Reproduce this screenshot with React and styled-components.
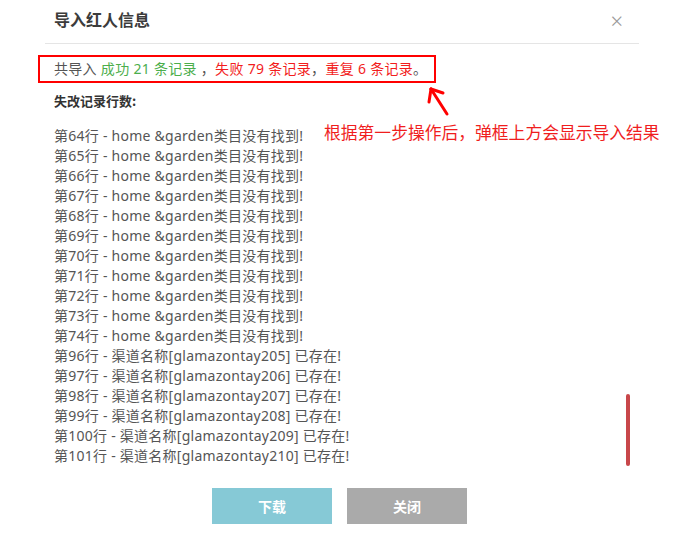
import React from "react";
import styled, { createGlobalStyle } from "styled-components";

const Global = createGlobalStyle`
  html, body { margin: 0; padding: 0; background: #fff; }
  body { font-family: "Noto Sans", "Noto Sans CJK SC", sans-serif; }
`;

const Page = styled.div`
  position: relative;
  width: 683px;
  height: 536px;
  overflow: hidden;
  background: #fff;
`;

const Dialog = styled.div`
  margin-left: 45px;
  width: 594px;
`;

const Header = styled.div`
  height: 44px;
  box-sizing: border-box;
  border-bottom: 1px solid #e5e5e5;
  display: flex;
  justify-content: space-between;
  align-items: flex-start;
  padding: 0 16px 0 9px;
`;

const Title = styled.div`
  font-family: "Noto Sans CJK SC", sans-serif;
  font-size: 16px;
  font-weight: bold;
  color: #3c3c3c;
  line-height: 38px;
`;

const Close = styled.div`
  font-family: "Noto Sans", sans-serif;
  font-size: 22px;
  font-weight: 300;
  color: #999;
  line-height: 40px;
`;

const Body = styled.div`
  padding: 11px 0 0 9px;
`;

const Summary = styled.div`
  box-sizing: border-box;
  width: 398px;
  height: 28px;
  margin-left: -16px;
  padding: 0 14px;
  border: 2px solid #f00;
  font-size: 14px;
  letter-spacing: 0.3px;
  line-height: 24px;
  color: #555;
  white-space: nowrap;
`;

const Tone = styled.span`
  color: ${(p) => (p.$tone === "ok" ? "#4cae4c" : "#f21d1d")};
`;

const SubTitle = styled.div`
  margin-top: 8px;
  font-family: "Noto Sans CJK SC", sans-serif;
  font-size: 13px;
  font-weight: bold;
  line-height: 20px;
  color: #333;
`;

const ListBox = styled.div`
  position: relative;
  margin-top: 15px;
  width: 576px;
`;

const Line = styled.div`
  font-size: 14px;
  letter-spacing: 0.25px;
  line-height: 20px;
  color: #555;
  white-space: nowrap;
`;

const Thumb = styled.div`
  position: absolute;
  right: 0;
  bottom: 0;
  width: 4px;
  height: 72px;
  border-radius: 2px;
  background: #c8474a;
`;

const Footer = styled.div`
  margin-top: 22px;
  display: flex;
  justify-content: center;
  gap: 15px;
  padding-right: 5px;
`;

const Button = styled.button`
  width: 120px;
  height: 36px;
  border: none;
  border-radius: 0;
  background: ${(p) => (p.$primary ? "#86c9d6" : "#aaaaaa")};
  color: #fff;
  font-family: "Noto Sans CJK SC", sans-serif;
  font-size: 14px;
  font-weight: bold;
  cursor: pointer;
`;

const Note = styled.div`
  position: absolute;
  left: 324px;
  top: 120px;
  font-family: "Noto Sans CJK SC", sans-serif;
  font-size: 16.8px;
  line-height: 24px;
  color: #f01e1e;
  white-space: nowrap;
`;

const Arrow = styled.svg`
  position: absolute;
  left: 420px;
  top: 82px;
`;

const rows = [];
for (let i = 64; i <= 74; i++) rows.push(`第${i}行 - home &garden类目没有找到!`);
for (let i = 96; i <= 101; i++)
  rows.push(`第${i}行 - 渠道名称[glamazontay${205 + (i - 96)}] 已存在!`);

export default function App() {
  return (
    <Page>
      <Global />
      <Dialog>
        <Header>
          <Title>导入红人信息</Title>
          <Close>×</Close>
        </Header>
        <Body>
          <Summary>
            共导入 <Tone $tone="ok">成功 21 条记录</Tone> ，<Tone>失败 79 条记录</Tone>，
            <Tone>重复 6 条记录</Tone>。
          </Summary>
          <SubTitle>失改记录行数:</SubTitle>
          <ListBox>
            {rows.map((r) => (
              <Line key={r}>{r}</Line>
            ))}
            <Thumb />
          </ListBox>
        </Body>
        <Footer>
          <Button $primary>下载</Button>
          <Button>关闭</Button>
        </Footer>
      </Dialog>
      <Arrow width="40" height="40" viewBox="0 0 40 40">
        <g stroke="#f00" strokeWidth="3" fill="none" strokeLinecap="round">
          <line x1="11" y1="7" x2="27" y2="32" />
          <line x1="11" y1="7" x2="9" y2="20" />
          <line x1="11" y1="7" x2="23" y2="11" />
        </g>
      </Arrow>
      <Note>根据第一步操作后，弹框上方会显示导入结果</Note>
    </Page>
  );
}
